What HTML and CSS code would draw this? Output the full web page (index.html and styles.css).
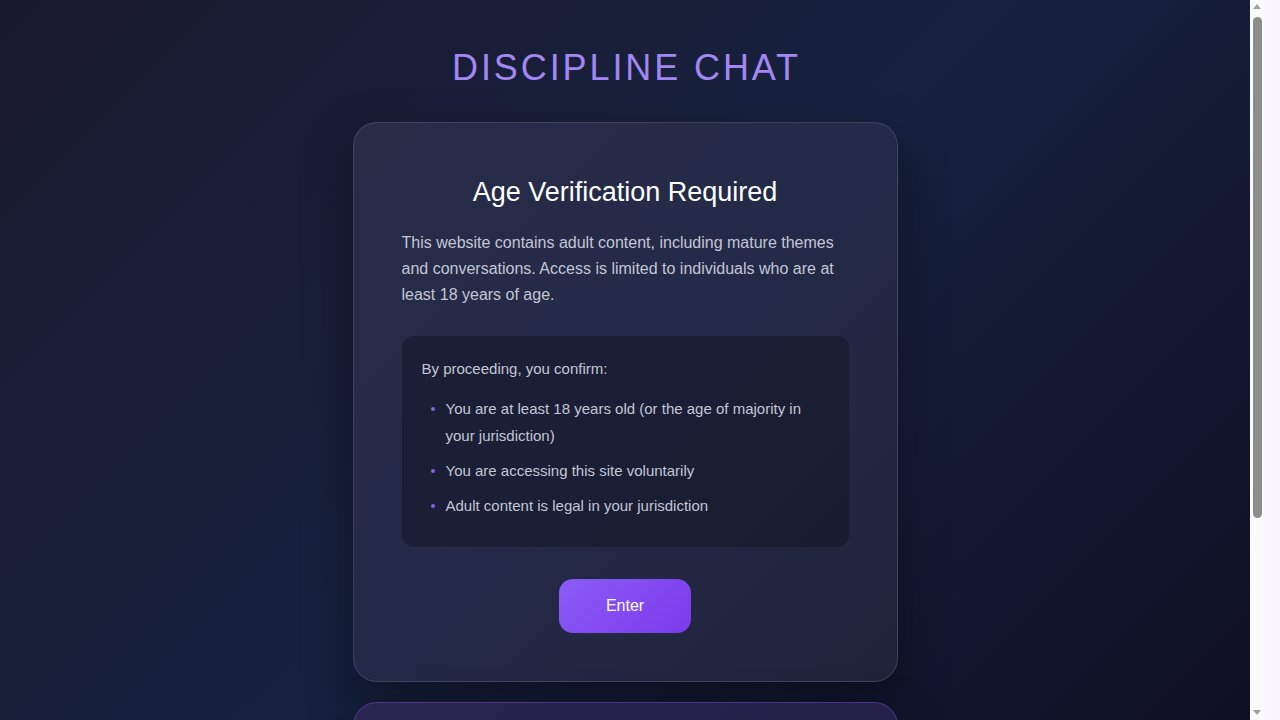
FILE: index.html
```html
<!DOCTYPE html>
<html lang="en">
<head>
<meta charset="utf-8">
<title>Discipline Chat</title>
<link rel="stylesheet" href="styles.css">
</head>
<body>
<main class="page">
  <h1 class="brand">DISCIPLINE CHAT</h1>
  <section class="card">
    <h2 class="card-title">Age Verification Required</h2>
    <p class="lead">This website contains adult content, including mature themes and conversations. Access is limited to individuals who are at least 18 years of age.</p>
    <div class="confirm">
      <p class="confirm-intro">By proceeding, you confirm:</p>
      <ul class="confirm-list">
        <li>You are at least 18 years old (or the age of majority in your jurisdiction)</li>
        <li>You are accessing this site voluntarily</li>
        <li>Adult content is legal in your jurisdiction</li>
      </ul>
    </div>
    <div class="actions">
      <button class="enter-btn" type="button">Enter</button>
    </div>
  </section>
  <section class="card card-alt">
    <h2 class="card-title">About Discipline Chat</h2>
    <p class="lead">A private space for conversations. Please read the terms and guidelines before continuing.</p>
  </section>
</main>
<div class="fake-scroll" aria-hidden="true">
  <div class="track">
    <span class="arrow arrow-up"></span>
    <span class="thumb"></span>
    <span class="arrow arrow-down"></span>
  </div>
  <div class="edge"></div>
</div>
</body>
</html>
```
FILE: styles.css
```css
html, body {
  margin: 0;
  padding: 0;
}
body {
  font-family: "Liberation Sans", Arial, sans-serif;
  background: linear-gradient(135deg, #1a1a2e 0%, #16213e 50%, #0f0f23 100%);
  background-attachment: fixed;
  min-height: 100vh;
  color: #fff;
  padding-right: 30px;
}
.page {
  display: flex;
  flex-direction: column;
  align-items: center;
  padding: 46px 20px 60px;
}
.brand {
  margin: 0 0 33px;
  font-size: 36px;
  line-height: 43px;
  font-weight: 400;
  letter-spacing: 2.9px;
  color: #a286f2;
  padding-left: 3px;
}
.card {
  box-sizing: border-box;
  width: 545px;
  padding: 48px;
  border-radius: 24px;
  border: 1px solid rgba(255, 255, 255, 0.12);
  background: linear-gradient(135deg, #282d48 0%, #232a47 50%, #20243a 100%);
  box-shadow: 0 20px 50px rgba(0, 0, 0, 0.35);
  margin-bottom: 20px;
}
.card-alt {
  border-color: rgba(139, 92, 246, 0.35);
  background: linear-gradient(135deg, #2a2450 0%, #221f48 100%);
}
.card-title {
  margin: 0 0 17px;
  font-size: 27px;
  line-height: 42px;
  font-weight: 400;
  text-align: center;
  color: #fff;
}
.lead {
  margin: 0 0 28px;
  font-size: 16px;
  line-height: 26px;
  color: #c3c6d6;
}
.confirm {
  background: rgba(15, 17, 30, 0.45);
  border-radius: 12px;
  padding: 20px;
}
.confirm-intro {
  margin: 0 0 13px;
  font-size: 15px;
  line-height: 26px;
  color: #c3c6d6;
}
.confirm-list {
  list-style: none;
  margin: 0;
  padding: 0;
}
.confirm-list li {
  position: relative;
  padding-left: 24px;
  margin-bottom: 8px;
  font-size: 15px;
  line-height: 27px;
  color: #c3c6d6;
}
.confirm-list li::before {
  content: "";
  position: absolute;
  left: 9px;
  top: 12px;
  width: 4px;
  height: 4px;
  border-radius: 50%;
  background: #8b5cf6;
}
.actions {
  display: flex;
  justify-content: center;
  margin-top: 32px;
}
.enter-btn {
  width: 132px;
  height: 54px;
  border: none;
  border-radius: 14px;
  background: linear-gradient(135deg, #8b5cf6 0%, #7c3aed 100%);
  color: #fff;
  font-family: "Liberation Sans", Arial, sans-serif;
  font-size: 16px;
  cursor: pointer;
}

/* replica of the browser scrollbar seen in the reference */
.fake-scroll {
  position: fixed;
  top: 0;
  right: 0;
  width: 30px;
  height: 100vh;
  display: flex;
}
.track {
  position: relative;
  width: 15px;
  height: 100%;
  background: #fafafa;
}
.edge {
  width: 15px;
  height: 100%;
  background: #f8f6fc;
}
.thumb {
  position: absolute;
  left: 3px;
  top: 17px;
  width: 9px;
  height: 501px;
  border-radius: 5px;
  background: #8d8d8d;
}
.arrow {
  position: absolute;
  left: 3px;
  width: 0;
  height: 0;
  border-left: 4.5px solid transparent;
  border-right: 4.5px solid transparent;
}
.arrow-up {
  top: 4px;
  border-bottom: 5px solid #a0a0a0;
}
.arrow-down {
  bottom: 5px;
  border-top: 5px solid #a0a0a0;
}
```
